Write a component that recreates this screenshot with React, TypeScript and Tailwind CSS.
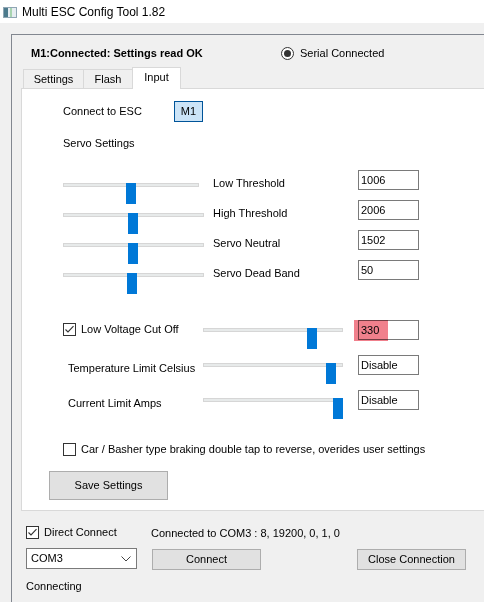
import React from "react";

const FONT = "font-['Liberation_Sans',Arial,sans-serif]";

function CheckBox({ checked }: { checked?: boolean }) {
  return (
    <svg width="13" height="13" viewBox="0 0 13 13" className="shrink-0">
      <rect x="0.5" y="0.5" width="12" height="12" fill="#fff" stroke="#333" />
      {checked && <polyline points="2.5,6.5 5,9 10.5,3.2" fill="none" stroke="#333" strokeWidth="1.1" />}
    </svg>
  );
}

function Radio() {
  return (
    <svg width="13" height="13" viewBox="0 0 13 13" className="shrink-0">
      <circle cx="6.5" cy="6.5" r="6" fill="#fff" stroke="#333" />
      <circle cx="6.5" cy="6.5" r="3.5" fill="#333" />
    </svg>
  );
}

// horizontal trackbar: thin grey track with blue thumb sitting on it
function Slider({ width, thumb }: { width: number; thumb: number }) {
  return (
    <div className="relative h-[21px]" style={{ width }}>
      <div className="mt-[8px] h-[4px] w-full bg-[#e7eaea] border border-[#d6d6d6]" />
      <div className="absolute top-0 w-[10px] h-[21px] bg-[#0078d7]" style={{ left: thumb }} />
    </div>
  );
}

function TextBox({ value }: { value: string }) {
  return (
    <div className="w-[61px] h-[20px] border border-[#7a7a7a] bg-white px-[2px] leading-[18px] text-black">
      {value}
    </div>
  );
}

function WinButton({ label, w, h = 21 }: { label: string; w: number; h?: number }) {
  return (
    <div
      className="flex items-center justify-center bg-[#e1e1e1] border border-[#adadad] text-black"
      style={{ width: w, height: h }}
    >
      {label}
    </div>
  );
}

const SERVO_ROWS = [
  { label: "Low Threshold", value: "1006", track: 136, thumb: 63 },
  { label: "High Threshold", value: "2006", track: 141, thumb: 65 },
  { label: "Servo Neutral", value: "1502", track: 141, thumb: 65 },
  { label: "Servo Dead Band", value: "50", track: 141, thumb: 64 },
];

export default function App() {
  return (
    <div className={`w-[484px] h-[602px] overflow-hidden bg-[#f0f0f0] text-[11px] text-black ${FONT}`}>
      {/* title bar */}
      <div className="h-[23px] bg-white flex items-center">
        <svg width="14" height="11" viewBox="0 0 14 11" className="ml-[3px] mt-[1px]">
          <rect x="0" y="0" width="14" height="11" fill="#8fa6b4" />
          <rect x="1" y="1" width="12" height="9" fill="#e6edf1" />
          <rect x="1" y="1" width="4" height="9" fill="#4c7a8c" />
          <rect x="7" y="1" width="2" height="9" fill="#a8d4b0" />
        </svg>
        <span className="ml-[5px] text-[12px] text-black">Multi ESC Config Tool 1.82</span>
      </div>

      {/* main frame */}
      <div className="ml-[11px] mt-[11px] h-[568px] border-l border-t border-[#828790]">
        <div className="h-[32px] pt-[4px] flex items-center">
          <span className="ml-[19px] w-[250px] font-bold">M1:Connected: Settings read OK</span>
          <Radio />
          <span className="ml-[6px]">Serial Connected</span>
        </div>

        {/* tabs */}
        <div className="ml-[11px] h-[21px] flex items-end relative z-10">
          <div className="w-[61px] h-[19px] flex items-center justify-center border-l border-t border-r border-[#d9d9d9]">
            Settings
          </div>
          <div className="w-[49px] h-[19px] flex items-center justify-center border-t border-r border-[#d9d9d9]">
            Flash
          </div>
          <div className="w-[49px] h-[22px] -mb-[1px] -ml-[1px] flex items-center justify-center pb-[2px] bg-white border-l border-t border-r border-[#d9d9d9]">
            Input
          </div>
        </div>

        {/* Input tab page */}
        <div className="ml-[9px] w-[480px] h-[423px] bg-white border-l border-t border-b border-[#d9d9d9]">
          <div className="mt-[12px] ml-[41px] h-[21px] flex items-center">
            <span className="w-[111px]">Connect to ESC</span>
            <div className="w-[29px] h-[21px] flex items-center justify-center bg-[#cce4f7] border border-[#005499]">M1</div>
          </div>
          <div className="mt-[11px] ml-[41px] h-[20px] flex items-center">Servo Settings</div>

          <div className="mt-[17px]">
            {SERVO_ROWS.map((r) => (
              <div key={r.label} className="ml-[41px] h-[30px] flex items-start">
                <div className="w-[150px] pt-[5px]">
                  <Slider width={r.track} thumb={r.thumb} />
                </div>
                <span className="w-[145px] pt-[7px] leading-[13px]">{r.label}</span>
                <TextBox value={r.value} />
              </div>
            ))}
          </div>

          {/* low voltage cut off */}
          <div className="mt-[30px] ml-[41px] h-[21px] flex items-start">
            <div className="w-[140px] h-[18px] flex items-center gap-[5px]">
              <CheckBox checked />
              <span>Low Voltage Cut Off</span>
            </div>
            <div className="w-[155px]">
              <Slider width={140} thumb={104} />
            </div>
            <div className="relative">
              <TextBox value="330" />
              <div className="absolute -left-[4px] top-0 w-[34px] h-[21px] bg-[#f0808c] mix-blend-multiply blur-[0.5px]" />
            </div>
          </div>

          <div className="mt-[14px] ml-[41px] h-[21px] flex items-start">
            <span className="w-[140px] pl-[5px] pt-[7px] leading-[13px]">Temperature Limit Celsius</span>
            <div className="w-[155px]">
              <Slider width={140} thumb={123} />
            </div>
            <TextBox value="Disable" />
          </div>

          <div className="mt-[14px] ml-[41px] h-[21px] flex items-start">
            <span className="w-[140px] pl-[5px] pt-[7px] leading-[13px]">Current Limit Amps</span>
            <div className="w-[155px]">
              <Slider width={140} thumb={130} />
            </div>
            <TextBox value="Disable" />
          </div>

          <div className="mt-[29px] ml-[41px] h-[18px] flex items-center gap-[5px]">
            <CheckBox />
            <span>Car / Basher type braking double tap to reverse, overides user settings</span>
          </div>

          <div className="mt-[13px] ml-[27px]">
            <WinButton label="Save Settings" w={119} h={29} />
          </div>
        </div>

        {/* connection area */}
        <div className="ml-[14px]">
          <div className="mt-[12px] h-[18px] flex items-start">
            <div className="w-[125px] h-[18px] flex items-center gap-[5px]">
              <CheckBox checked />
              <span>Direct Connect</span>
            </div>
            <span className="pt-[4px] leading-[13px]">Connected to COM3 : 8, 19200, 0, 1, 0</span>
          </div>
          <div className="mt-[7px] flex items-start">
            <div className="w-[111px] h-[21px] bg-white border border-[#7a7a7a] flex items-center justify-between pl-[4px] pr-[5px]">
              <span>COM3</span>
              <svg width="10" height="6" viewBox="0 0 10 6">
                <polyline points="0.5,0.5 5,5 9.5,0.5" fill="none" stroke="#444" strokeWidth="1" />
              </svg>
            </div>
            <div className="ml-[15px] mt-[1px]">
              <WinButton label="Connect" w={109} />
            </div>
            <div className="ml-[96px] mt-[1px]">
              <WinButton label="Close Connection" w={109} />
            </div>
          </div>
          <div className="mt-[10px] leading-[13px]">Connecting</div>
        </div>
      </div>
    </div>
  );
}
